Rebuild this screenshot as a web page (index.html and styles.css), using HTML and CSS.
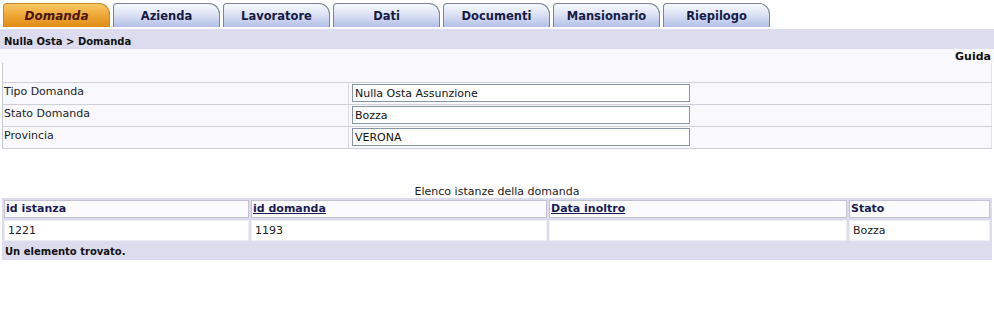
FILE: index.html
```html
<!DOCTYPE html>
<html lang="it">
<head>
  <meta charset="UTF-8">
  <title>Nulla Osta - Domanda</title>
  <link rel="stylesheet" href="styles.css">
</head>
<body>
  <div class="tabs">
    <a class="tab active" href="#">Domanda</a>
    <a class="tab" href="#">Azienda</a>
    <a class="tab" href="#">Lavoratore</a>
    <a class="tab" href="#">Dati</a>
    <a class="tab" href="#">Documenti</a>
    <a class="tab" href="#">Mansionario</a>
    <a class="tab" href="#">Riepilogo</a>
  </div>

  <div class="crumb">Nulla Osta &gt; Domanda</div>
  <div class="guida">Guida</div>

  <table class="form">
    <tr class="empty"><td colspan="2"></td></tr>
    <tr>
      <td class="label">Tipo Domanda</td>
      <td class="value"><input type="text" value="Nulla Osta Assunzione" readonly></td>
    </tr>
    <tr>
      <td class="label">Stato Domanda</td>
      <td class="value"><input type="text" value="Bozza" readonly></td>
    </tr>
    <tr>
      <td class="label">Provincia</td>
      <td class="value"><input type="text" value="VERONA" readonly></td>
    </tr>
  </table>

  <div class="caption">Elenco istanze della domanda</div>
  <table class="list">
    <colgroup>
      <col class="c1"><col class="c2"><col class="c3"><col>
    </colgroup>
    <tr>
      <th>id istanza</th>
      <th><a href="#">id domanda</a></th>
      <th><a href="#">Data inoltro</a></th>
      <th>Stato</th>
    </tr>
    <tr>
      <td>1221</td>
      <td>1193</td>
      <td></td>
      <td>Bozza</td>
    </tr>
  </table>
  <div class="found">Un elemento trovato.</div>
</body>
</html>
```

FILE: styles.css
```css
body {
  margin: 0;
  background-color: #fff;
  font-family: "DejaVu Sans", Verdana, sans-serif;
  font-size: 11px;
  color: #222;
}
.tabs {
  display: flex;
  gap: 3px;
  padding: 3px 0 0 3px;
  height: 27px;
  box-sizing: border-box;
  margin-bottom: 2px;
}
.tab {
  width: 107px;
  box-sizing: border-box;
  height: 24px;
  line-height: 24px;
  text-align: center;
  font-weight: bold;
  font-size: 11.5px;
  color: #161b44;
  text-decoration: none;
  border: 1px solid #7c8494;
  border-bottom: none;
  border-radius: 4px 11px 0 0;
  background: linear-gradient(#f7f9fe, #dde3f5 45%, #b2bfe6);
}
.tab.active {
  font-style: italic;
  color: #4a1400;
  font-size: 12px;
  border-color: #c88a2c;
  background: linear-gradient(#f9c866, #efa735 50%, #e08b16);
}
.crumb {
  background-color: #dcdcee;
  height: 20px;
  box-sizing: border-box;
  padding: 7px 4px 0;
  font-size: 10px;
  line-height: 12px;
  font-weight: bold;
  color: #111;
}
.guida {
  background-color: #f9f9fd;
  text-align: right;
  font-weight: bold;
  color: #111;
  height: 14px;
  box-sizing: border-box;
  padding: 2px 3px 0;
  line-height: 12px;
}
.form {
  margin-left: 2px;
  width: 990px;
  border-collapse: collapse;
  background-color: #f9f9fd;
  border-left: 1px solid #c9c9d1;
  border-right: 1px solid #e4e4ec;
}
.form td {
  border-bottom: 1px solid #cfcfd7;
  padding: 0;
  vertical-align: top;
}
.form .empty td {
  height: 19px;
}
.form .label {
  width: 342px;
  padding: 2px 2px 1px 1px;
  line-height: 14px;
  height: 18px;
}
.form .value {
  border-left: 1px solid #dcdce4;
  padding: 1px 2px 2px 3px;
}
.form input {
  display: block;
  width: 338px;
  height: 18px;
  box-sizing: border-box;
  margin: 0;
  padding: 0 1px 0 2px;
  border: 1px solid #8897a6;
  background-color: #fff;
  font-family: "DejaVu Sans", Verdana, sans-serif;
  font-size: 11px;
  color: #111;
}
.caption {
  margin-top: 36px;
  text-align: center;
  line-height: 13px;
  color: #222;
}
.list {
  margin-left: 2px;
  width: 990px;
  table-layout: fixed;
  border-spacing: 2px;
  background-color: #dcdcee;
}
.list .c1 { width: 245px; }
.list .c2 { width: 296px; }
.list .c3 { width: 298px; }
.list th {
  text-align: left;
  height: 16px;
  padding: 0 1px;
  border: 1px solid #c2c2d2;
  background-color: #fbfbfe;
  color: #1a1a55;
  font-size: 11px;
  line-height: 16px;
}
.list th a {
  color: #1a1a55;
}
.list td {
  height: 18px;
  padding: 0 2px 0 3px;
  border: 1px solid #ededf5;
  background-color: #fff;
  line-height: 19px;
  color: #222;
}
.found {
  margin-left: 2px;
  width: 990px;
  background-color: #dcdcee;
  font-size: 10px;
  font-weight: bold;
  line-height: 16px;
  height: 17px;
  padding: 1px 0 0 3px;
  box-sizing: border-box;
  color: #111;
}
```
